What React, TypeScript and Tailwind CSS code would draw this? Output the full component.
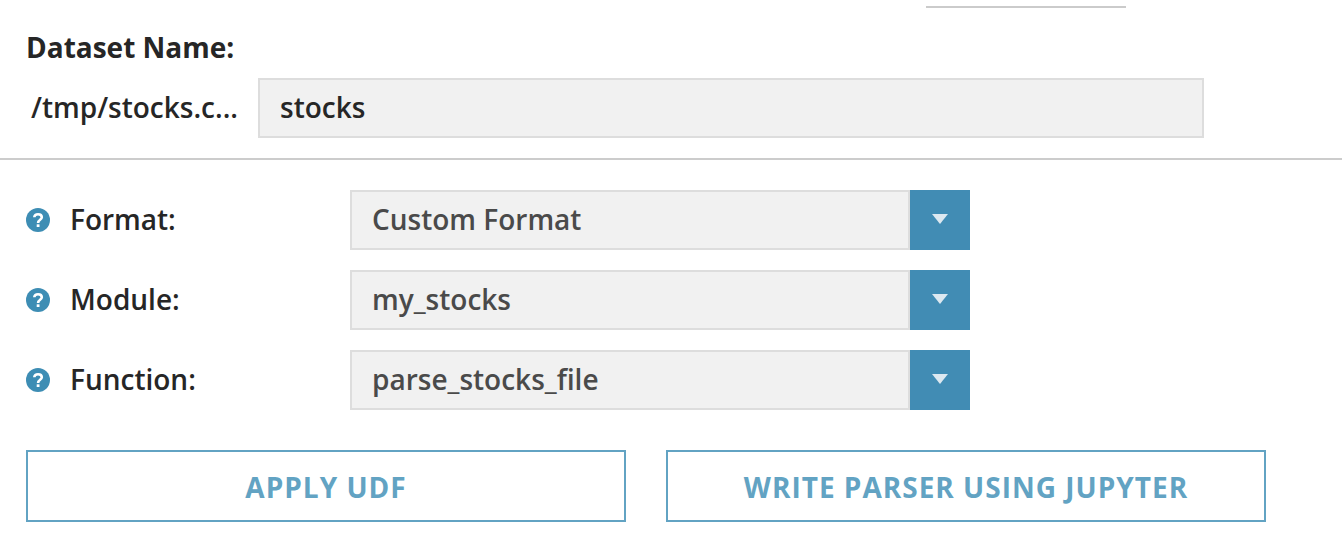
import React from "react";

const fields = [
  { label: "Format:", value: "Custom Format" },
  { label: "Module:", value: "my_stocks" },
  { label: "Function:", value: "parse_stocks_file" },
];

function HelpIcon() {
  return (
    <svg viewBox="0 0 24 24" className="block size-6 shrink-0">
      <circle cx="12" cy="12" r="12" fill="#3d8db4" />
      <path d="M8.3 9.3C8.3 7.3 9.8 6.2 12 6.2s3.8 1.2 3.8 3.1c0 2.6-3.7 2.5-3.7 5.7" fill="none" stroke="#fff" strokeWidth="2.6" />
      <rect x="10.7" y="16.3" width="2.8" height="2.7" fill="#fff" />
    </svg>
  );
}

export default function App() {
  return (
    <main className="flex h-[544px] w-full flex-col overflow-hidden bg-white font-['Open_Sans',sans-serif] text-[28px] leading-[40px] font-semibold text-[#262626]">
      <div className="ml-[926px] mt-1.5 h-0.5 w-[200px] shrink-0 bg-[#cbcbcb]" />
      <section className="flex h-[152px] shrink-0 flex-col border-b-2 border-[#cccccc] pt-[19px]">
        <h1 className="ml-[26px] h-[51px] font-bold">Dataset Name:</h1>
        <div className="flex h-[60px] items-center">
          <span className="w-[258px] pb-0.5 pl-[31px]">/tmp/stocks.c...</span>
          <div className="flex h-[60px] w-[946px] items-center border-2 border-[#dddddd] bg-[#f1f1f1] pb-0.5 pl-5">stocks</div>
        </div>
      </section>
      <section className="mt-[30px] flex shrink-0 flex-col gap-5 pl-[26px]">
        {fields.map((f) => (
          <div key={f.label} className="flex h-[60px] items-center">
            <HelpIcon />
            <span className="ml-5 w-[280px] pb-0.5">{f.label}</span>
            <div className="flex h-[60px] w-[560px] items-center border-2 border-[#dddddd] bg-[#f1f1f1] pb-0.5 pl-5 text-[#4a4a4a]">{f.value}</div>
            <button className="flex size-[60px] items-center justify-center bg-[#418cb4] pb-0.5">
              <svg viewBox="0 0 16 10" className="h-2.5 w-4"><path d="M0 0h16L8 10z" fill="#dce8f0" /></svg>
            </button>
          </div>
        ))}
      </section>
      <section className="mt-10 flex shrink-0 gap-10 pl-[26px] font-bold tracking-[1px] text-[#62a3c3]">
        <button className="h-[72px] w-[600px] border-2 border-[#62a3c3] pt-0.5">APPLY UDF</button>
        <button className="h-[72px] w-[600px] border-2 border-[#62a3c3] pt-0.5">WRITE PARSER USING JUPYTER</button>
      </section>
    </main>
  );
}
